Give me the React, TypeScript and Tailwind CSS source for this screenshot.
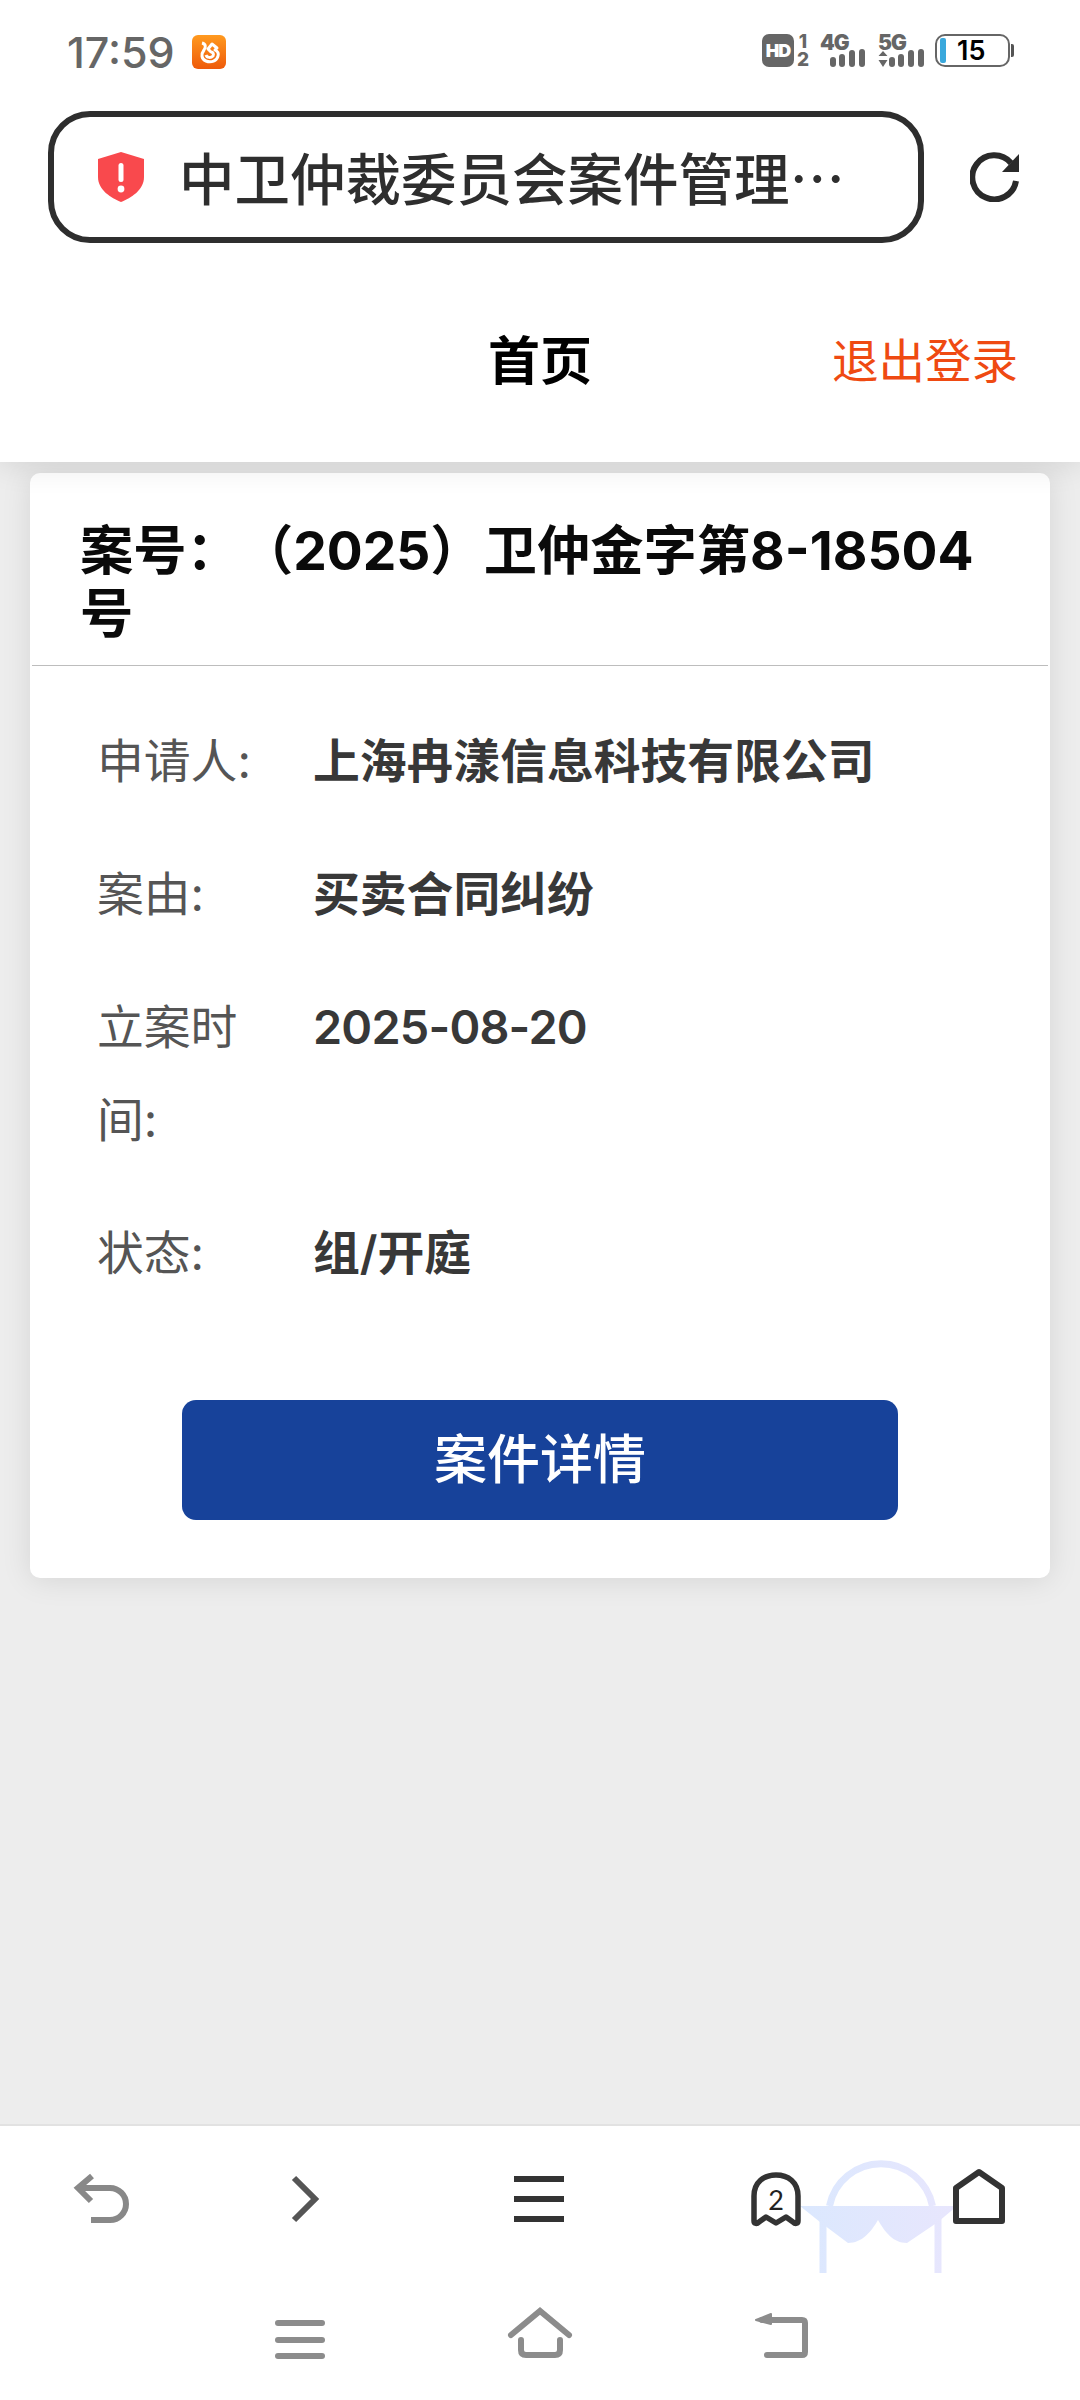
const cjk = { fontFamily: 'Inter, "Noto Sans CJK SC", "Noto Sans", sans-serif', textSpacingTrim: 'space-all' } as React.CSSProperties;
const onlyCjk = { fontFamily: '"Noto Sans CJK SC", "Noto Sans", sans-serif' };
const lib = { fontFamily: 'Inter, "Liberation Sans", sans-serif' };

function Signal({ five }: { five?: boolean }) {
  return (
    <svg width="46" height="34" viewBox="0 0 46 34" className="block">
      {five ? (
        <g fill="#666">
          <path d="M5 17 L9.5 22 H0.5 Z M5 33 L0.5 26 H9.5 Z" />
        </g>
      ) : null}
      <g fill="#666">
        <rect x={five ? 11 : 10} y="23" width="6" height="10" rx="3" />
        <rect x={five ? 20 : 19} y="20" width="6" height="13" rx="3" />
        <rect x={five ? 30 : 29} y="16" width="6" height="17" rx="3" />
        <rect x={five ? 40 : 39} y="15" width="6" height="18" rx="3" />
      </g>
    </svg>
  );
}

function StatusBar() {
  return (
    <div className="flex h-[100px] items-start justify-between pl-[67px] pr-[66px] pt-[34px]">
      <div className="flex items-center">
        <span className="text-[43px] leading-[36px] font-medium text-[#666]" style={lib}>17:59</span>
        <svg width="34" height="34" viewBox="0 0 34 34" className="ml-[17px] block">
          <defs>
            <linearGradient id="o" x1="0" y1="0" x2="0" y2="1">
              <stop offset="0" stopColor="#ff9a1f" />
              <stop offset="1" stopColor="#ee5a0a" />
            </linearGradient>
          </defs>
          <rect width="34" height="34" rx="6" fill="url(#o)" />
          <path d="M10 8 C14 9 14 12 12 15 C9 19 9 24 14 26 C19 28 25 26 26 21 C27 18 25 16 23 15 L25 13 L20 9 L16 14 L19 17 C21 17 22 19 21 21 C19 23 15 23 14 20" fill="none" stroke="#fff" strokeWidth="3" strokeLinejoin="round" />
        </svg>
      </div>
      <div className="flex items-start">
        <div className="flex h-[33px] w-[32px] items-center justify-center overflow-hidden rounded-[7px] bg-[#666] text-[18px] leading-none font-black tracking-[-1px] text-white" style={lib}>HD</div>
        <div className="ml-[3px] flex h-[33px] w-[12px] flex-col items-center justify-between text-[19px] leading-[15px] font-extrabold text-[#666]" style={lib}>
          <span>1</span>
          <span>2</span>
        </div>
        <div className="relative ml-[11px] h-[33px] w-[47px]">
          <span className="absolute left-0 top-0 text-[21px] leading-[17px] font-black tracking-[-1px] text-[#666]" style={lib}>4G</span>
          <Signal />
        </div>
        <div className="relative ml-[11px] h-[33px] w-[46px]">
          <span className="absolute left-0 top-0 text-[21px] leading-[17px] font-black tracking-[-1px] text-[#666]" style={lib}>5G</span>
          <Signal five />
        </div>
        <div className="ml-[11px] flex items-center">
          <div className="flex h-[33px] w-[75px] items-center rounded-[10px] border-2 border-[#666] pl-[3px]">
            <div className="h-[25px] w-[6px] rounded-[2px] bg-[#3aa8dc]" />
            <span className="ml-[11px] text-[27px] leading-none font-semibold text-black" style={lib}>15</span>
          </div>
          <div className="ml-[1px] h-[13px] w-[3px] rounded-r-[2px] bg-[#555]" />
        </div>
      </div>
    </div>
  );
}

function Header() {
  return (
    <header className="relative z-10 h-[462px] bg-white shadow-[0_2px_30px_rgba(0,0,0,0.12)]">
      <StatusBar />
      <div className="mt-[11px] flex items-center pl-[48px]">
        <div className="flex h-[132px] w-[876px] items-center rounded-[42px] border-[6px] border-[#2e2e2e] pl-[44px]">
          <svg width="46" height="50" viewBox="0 0 46 50" className="block shrink-0">
            <path d="M23 0 L46 7 V25 C46 38 33 46 23 50 C13 46 0 38 0 25 V7 Z" fill="#f9494d" strokeLinejoin="round" />
            <rect x="20.5" y="11" width="5" height="19" rx="2.5" fill="#fff" />
            <circle cx="23" cy="37" r="3.4" fill="#fff" />
          </svg>
          <span className="ml-[35px] text-[55.5px] leading-none font-medium whitespace-nowrap text-[#2e2e2e]" style={onlyCjk}>中卫仲裁委员会案件管理…</span>
        </div>
        <svg width="50" height="50" viewBox="0 0 50 50" className="ml-[46px] block">
          <path d="M46 29 A22 22 0 1 1 41 11" fill="none" stroke="#2a2a2a" strokeWidth="6" />
          <path d="M49 2 V20 H32 Z" fill="#2a2a2a" />
        </svg>
      </div>
      <div className="relative mt-[71px] flex h-[96px] items-center justify-center">
        <span className="text-[52px] leading-none font-bold text-black" style={cjk}>首页</span>
        <span className="absolute right-[62px] top-[24px] text-[46.5px] leading-none text-[#ef4a12]" style={cjk}>退出登录</span>
      </div>
    </header>
  );
}

function Row({ label, value, tight }: { label: string; value: string; tight?: boolean }) {
  return (
    <div className="mb-[40px] flex text-[46.8px] leading-[93px]" style={cjk}>
      <div className="w-[158px] shrink-0 text-[#555]">{label}</div>
      <div className={tight ? 'ml-[58px] font-semibold tracking-[-0.8px] text-[#383838]' : 'ml-[58px] font-semibold text-[#383838]'}>{value}</div>
    </div>
  );
}

function Card() {
  return (
    <div className="mx-[30px] mt-[11px] h-[1105px] rounded-[10px] bg-white shadow-[0_2px_30px_rgba(0,0,0,0.1)]" style={cjk}>
      <div className="mx-[2px] h-[193px] border-b border-[#bdbdbd] pl-[48px] pr-[40px] pt-[46px] text-[53.3px] leading-[63px] font-bold text-[#0a0a0a]">
        案号：（2025）卫仲金字第8-18504号
      </div>
      <div className="pl-[67px] pt-[49px]">
        <Row label="申请人:" value="上海冉漾信息科技有限公司" />
        <Row label="案由:" value="买卖合同纠纷" />
        <Row label="立案时间:" value="2025-08-20" tight />
        <Row label="状态:" value="组/开庭" />
      </div>
      <div className="mx-[152px] mt-[100px] flex h-[120px] items-center justify-center rounded-[14px] bg-[#17429a] text-[53px] leading-none font-medium text-white">
        案件详情
      </div>
    </div>
  );
}

function BottomBar() {
  return (
    <footer className="relative h-[276px] border-t-2 border-[#e2e2e2] bg-white">
      <svg width="60" height="52" viewBox="70 2172 60 52" className="absolute left-[70px] top-[46px] block">
        <path d="M92 2176 L78 2188 L91 2201 M78 2188 H110 A16 16 0 0 1 110 2220 H91" fill="none" stroke="#888" strokeWidth="6" />
      </svg>
      <svg width="30" height="52" viewBox="290 2172 30 52" className="absolute left-[290px] top-[46px] block">
        <path d="M294 2178 L315 2199 L294 2220" fill="none" stroke="#555" strokeWidth="6" />
      </svg>
      <div className="absolute left-[514px] top-[50px] flex h-[46px] w-[50px] flex-col justify-between">
        <div className="h-[6px] bg-[#333]" />
        <div className="h-[6px] bg-[#333]" />
        <div className="h-[6px] bg-[#333]" />
      </div>
      <svg width="176" height="125" viewBox="790 2156 176 125" className="absolute left-[790px] top-[30px] block">
        <defs>
          <linearGradient id="g" gradientUnits="userSpaceOnUse" x1="800" y1="0" x2="957" y2="0">
            <stop offset="0" stopColor="#dbe8fe" />
            <stop offset="1" stopColor="#e8e6fd" />
          </linearGradient>
        </defs>
        <path d="M829.5 2206 A52.5 52.5 0 0 1 932.5 2206 M823 2206 V2273 M938 2206 V2273" fill="none" stroke="url(#g)" strokeWidth="7" />
        <path d="M800 2206 H957 L938 2222 L907 2243 C893 2243 885 2232 878 2220 C871 2232 862 2243 848 2243 L820 2222 Z" fill="url(#g)" />
      </svg>
      <svg width="56" height="60" viewBox="748 2170 56 60" className="absolute left-[748px] top-[44px] block">
        <path d="M754 2221 V2196 C754 2182 764 2175 776 2175 C788 2175 798 2182 798 2196 V2221 C798 2224 795 2224 793 2222 L786 2217 L776 2223 L766 2217 L759 2222 C757 2224 754 2224 754 2221 Z" fill="none" stroke="#333" strokeWidth="5.5" strokeLinejoin="round" />
        <text x="776" y="2210" textAnchor="middle" fontSize="27" fontFamily="Lato, sans-serif" fill="#222">2</text>
      </svg>
      <svg width="60" height="60" viewBox="950 2168 60 60" className="absolute left-[950px] top-[42px] block">
        <path d="M956 2188 L979 2172 L1002 2188 V2221 H956 Z" fill="none" stroke="#333" strokeWidth="6" strokeLinejoin="round" />
      </svg>
      <div className="absolute left-[275px] top-[194px] flex h-[39px] w-[50px] flex-col justify-between">
        <div className="h-[6px] rounded-full bg-[#8c8c8c]" />
        <div className="h-[6px] rounded-full bg-[#8c8c8c]" />
        <div className="h-[6px] rounded-full bg-[#8c8c8c]" />
      </div>
      <svg width="70" height="56" viewBox="505 2306 70 56" className="absolute left-[505px] top-[180px] block">
        <path d="M511 2335 L540 2311 L569 2335 M521 2340 V2350 Q521 2355 526 2355 H555 Q560 2355 560 2350 V2340" fill="none" stroke="#8c8c8c" strokeWidth="6" strokeLinecap="round" />
      </svg>
      <svg width="60" height="56" viewBox="752 2306 60 56" className="absolute left-[752px] top-[180px] block">
        <path d="M771 2314 L756 2320 L771 2324 Z" fill="#8c8c8c" stroke="#8c8c8c" strokeWidth="2" strokeLinejoin="round" />
        <path d="M762 2320 H802 Q805 2320 805 2323 V2352 Q805 2355 802 2355 H767" fill="none" stroke="#8c8c8c" strokeWidth="6" strokeLinecap="round" />
      </svg>
    </footer>
  );
}

export default function App() {
  return (
    <div className="flex h-[2400px] w-[1080px] flex-col overflow-hidden bg-[#ededed]">
      <Header />
      <main className="flex-1">
        <Card />
      </main>
      <BottomBar />
    </div>
  );
}
